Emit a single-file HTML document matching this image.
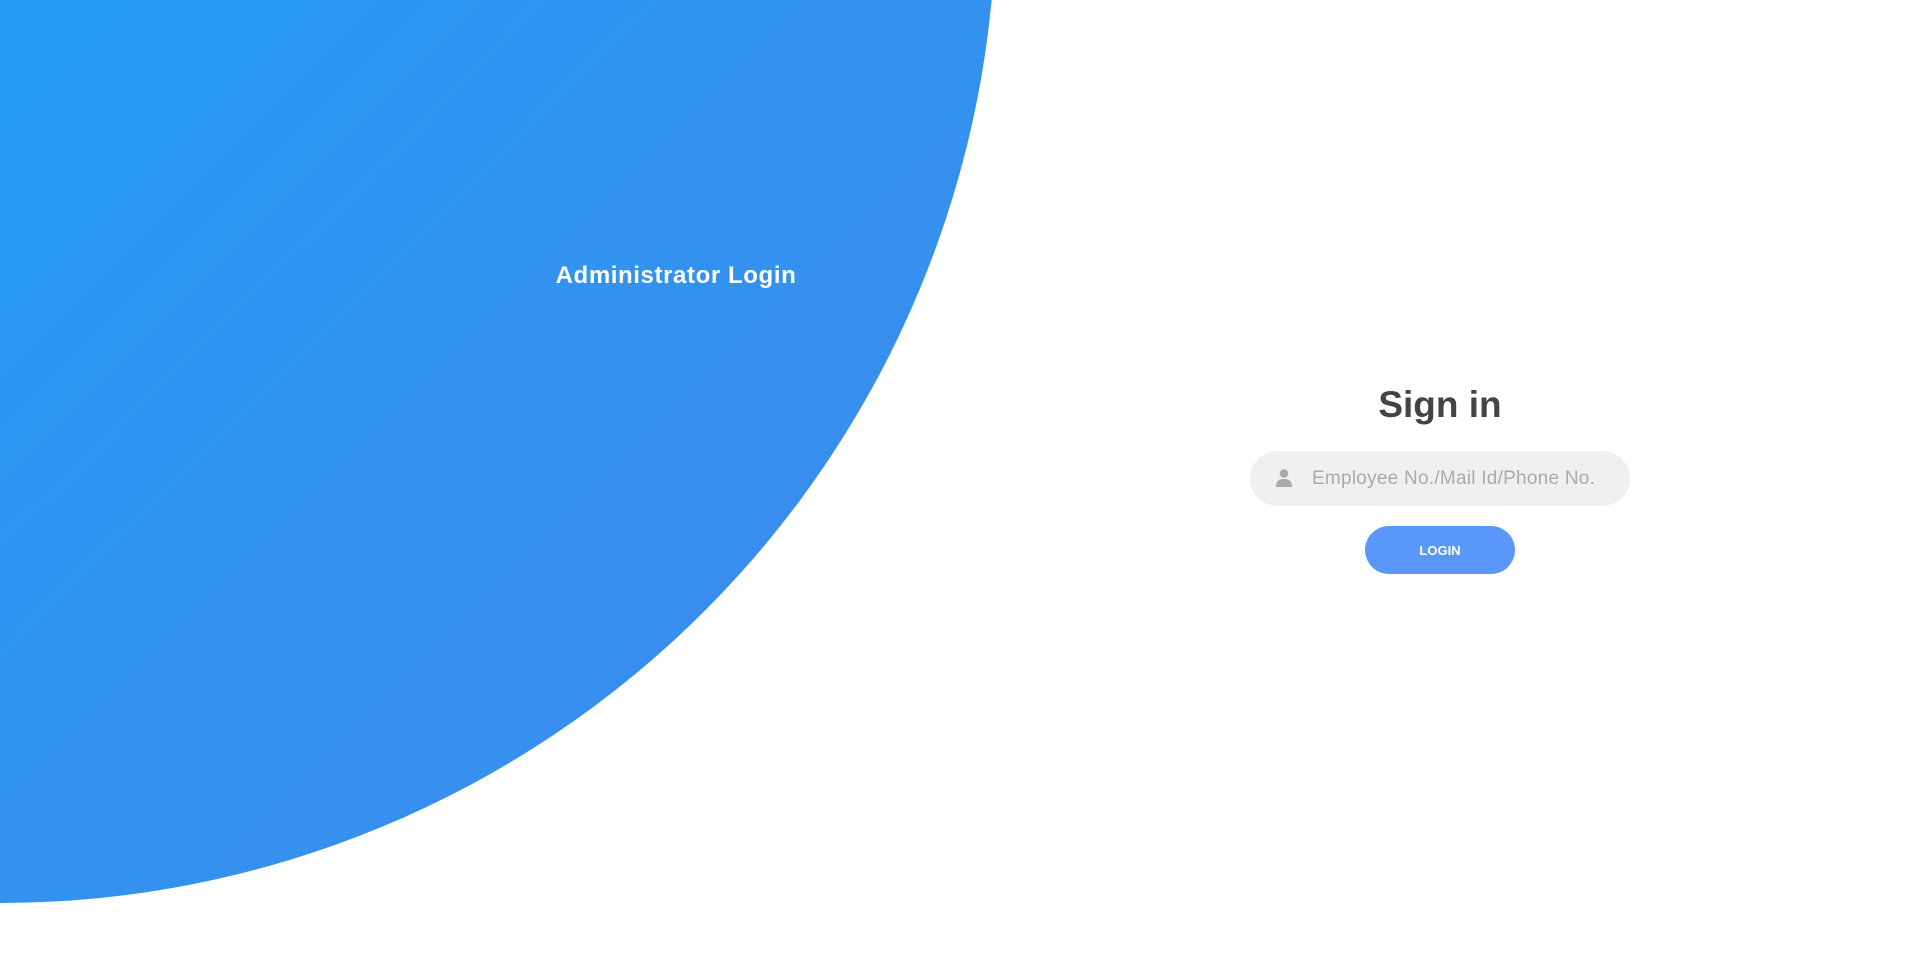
<!DOCTYPE html>
<html><head><meta charset="utf-8"><style>
html,body{margin:0;padding:0;width:1920px;height:963px;overflow:hidden;background:#fff;font-family:"Liberation Sans",sans-serif;}
.circle{position:absolute;left:0;top:0;width:1000px;height:910px;background:linear-gradient(135deg,#239df6 0%,#3492ef 50%,#3d88eb 100%);clip-path:circle(996px at 0 -93px);}
.admin{position:absolute;left:536px;top:262px;width:280px;text-align:center;color:#fff;font-weight:bold;font-size:24px;letter-spacing:0.6px;}
.signin{position:absolute;left:1340px;top:384px;width:200px;text-align:center;color:#444;font-weight:bold;font-size:37px;}
.input{position:absolute;left:1250px;top:451px;width:380px;height:55px;border-radius:28px;background:#f0f0f0;}
.input .ph{position:absolute;left:62px;top:17px;font-size:19px;color:#aaa;letter-spacing:0.25px;}
.input svg{position:absolute;left:26px;top:18px;}
.btn{position:absolute;left:1365px;top:526px;width:150px;height:48px;border-radius:24px;background:#5a97fa;color:#fff;font-weight:bold;font-size:13px;text-align:center;line-height:50px;}
</style></head><body>
<div class="circle"></div>
<div class="admin">Administrator Login</div>
<div class="signin">Sign in</div>
<div class="input">
<svg width="16" height="18" viewBox="0 0 16 18"><circle cx="8" cy="4.5" r="4.3" fill="#aaa"/><path d="M0 18 C0 12 3 10 8 10 C13 10 16 12 16 18 Z" fill="#aaa"/></svg>
<span class="ph">Employee No./Mail Id/Phone No.</span></div>
<div class="btn">LOGIN</div>
</body></html>
